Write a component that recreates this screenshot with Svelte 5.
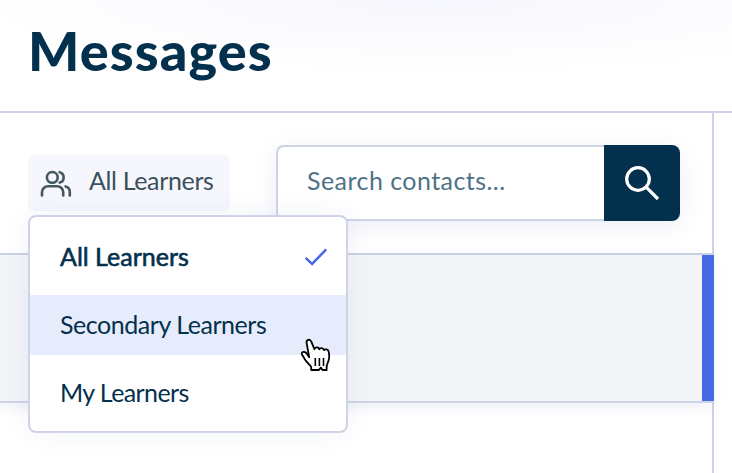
<script lang="ts">
	const options = ['All Learners', 'Secondary Learners', 'My Learners'];

	let selected = $state('All Learners');
	let highlighted = $state('Secondary Learners');
	let search = $state('');
</script>

<div class="page">
	<header>
		<h1>Messages</h1>
	</header>

	<div class="content">
		<div class="contacts">
			<div class="toolbar">
				<div class="filter">
					<button type="button" class="filter-btn">
						<svg class="people" viewBox="0 0 32 28" width="32" height="28">
							<circle cx="12.3" cy="8.4" r="5.4" />
							<path d="M2 26.4v-3.2a6 6 0 0 1 6-6h9.2a6 6 0 0 1 6 6v3.2" />
							<path d="M19.7 3.2a5.4 5.4 0 0 1 0 10.4M25.6 17.4a5.6 5.6 0 0 1 4.2 5.6v3.4" />
						</svg>
						<span>{selected}</span>
					</button>

					<ul class="menu">
						{#each options as option}
							<li
								class:selected={option === selected}
								class:highlighted={option === highlighted}
							>
								<button
									type="button"
									class:long={option.length > 12}
									onclick={() => selected = option}
									onmouseenter={() => highlighted = option}
								>
									{option}
								</button>
								{#if option === selected}
									<svg class="check" viewBox="0 0 24 18" width="24" height="18">
										<path d="M1.6 9.8l6.5 6.1L22.2 1.4" />
									</svg>
								{/if}
								{#if option === highlighted}
									<svg class="pointer" viewBox="0 0 32 34" width="32" height="34">
										<path d="M9.2 19.2L6.6 4.8C6 1.4 10.2.6 11.3 3.7l3.1 7.5c.5-2.6 4.5-2.5 4.9.2.9-2 4.3-1.7 4.6.8 1.2-1.5 4.3-1 4.8 1.6.9 3.9.6 8-1.2 11.6-1 1.9-1.2 3.4-.9 6.6h-4.1l-1.6-2.4-2 2.4h-7.7v-3.1c-1.7-2.4-4.1-4.3-5.9-6.9-1.2-1.9-1.8-3.6-3.2-5.1-1.2-1.9.6-3.8 2.9-2.8 1.9.9 2.9 3.3 4.2 5.1z" />
										<path class="lines" d="M15.3 20v8M19.4 20v8M23.5 20v8" />
									</svg>
								{/if}
							</li>
						{/each}
					</ul>
				</div>

				<form class="search">
					<input type="text" placeholder="Search contacts..." bind:value={search} />
					<button type="button" aria-label="Search">
						<svg viewBox="0 0 36 36" width="36" height="36">
							<circle cx="14" cy="14" r="11.3" />
							<path d="M22.2 22.2L34 34" />
						</svg>
					</button>
				</form>
			</div>

			<div class="conversation"></div>
		</div>
		<div class="thread"></div>
	</div>
</div>

<style>
	:global(body) {
		background: #fff;
		overflow: hidden;
	}

	.page {
		display: flex;
		flex-direction: column;
		height: 473px;
		font-family: Lato, "Liberation Sans", sans-serif;
		color: #03304d;
	}

	header {
		box-sizing: border-box;
		height: 113px;
		flex: none;
		padding: 19px 28px 0 28px;
		border-bottom: 2px solid #ced4e5;
		background: radial-gradient(ellipse 480px 75px at 60% 0, #f6f7fd, #fff);
	}

	h1 {
		margin: 0;
		font-size: 54px;
		font-weight: 900;
		line-height: 64px;
		letter-spacing: 1.1px;
	}

	button {
		border: none;
		background: none;
		font: inherit;
		color: inherit;
		cursor: pointer;
	}

	svg {
		fill: none;
		flex: none;
	}

	.content {
		display: flex;
		flex: 1;
	}

	.contacts {
		box-sizing: border-box;
		width: 714px;
		border-right: 2px solid #ced4e5;
	}

	.thread {
		flex: 1;
	}

	.toolbar {
		box-sizing: border-box;
		display: flex;
		align-items: flex-start;
		gap: 46px;
		height: 142px;
		padding: 32px 28px;
		border-bottom: 2px solid #ced4e5;
	}

	.filter {
		position: relative;
		margin-top: 10px;
	}

	.filter-btn {
		display: flex;
		align-items: center;
		gap: 17px;
		width: 202px;
		height: 56px;
		padding: 0 12px;
		border-radius: 6px;
		background: #f6f7fc;
		color: #3b505d;
		font-size: 25px;
		letter-spacing: -0.35px;
		white-space: nowrap;
	}

	.filter-btn span {
		padding-bottom: 7px;
	}

	.people {
		stroke: #435760;
		stroke-width: 2.6;
		stroke-linecap: round;
	}

	.menu {
		position: absolute;
		z-index: 2;
		top: 60px;
		left: 0;
		box-sizing: border-box;
		width: 320px;
		height: 218px;
		margin: 0;
		padding: 10px 0;
		border: 2px solid #ced4e5;
		border-radius: 8px;
		background: #fff;
		box-shadow: 0 0 24px rgba(75, 95, 175, 0.08);
		list-style: none;
	}

	li {
		position: relative;
		display: flex;
		align-items: center;
		justify-content: space-between;
		height: 60px;
		margin-bottom: 8px;
		padding: 0 18px 0 30px;
	}

	li button {
		padding: 0 0 3px;
		font-size: 25px;
		letter-spacing: -0.6px;
	}

	li button.long {
		letter-spacing: -0.45px;
	}

	li.selected button {
		-webkit-text-stroke: 0.6px #03304d;
		letter-spacing: 0;
	}

	li.highlighted {
		background: #e6ecfb;
	}

	.check {
		stroke: #466ae4;
		stroke-width: 2.5;
	}

	/* hand cursor over the hovered option */
	.pointer {
		position: absolute;
		top: 43px;
		left: 270px;
		fill: #fff;
		stroke: #000;
		stroke-width: 1.8;
		stroke-linejoin: round;
		pointer-events: none;
	}

	.pointer .lines {
		stroke-width: 1.6;
	}

	.search {
		display: flex;
		width: 404px;
		height: 76px;
		border-radius: 8px;
		box-shadow: 0 6px 24px rgba(75, 95, 175, 0.1);
	}

	.search input {
		box-sizing: border-box;
		width: 328px;
		padding: 0 0 6px 29px;
		border: 2px solid #ced4e5;
		border-right: none;
		border-radius: 8px 0 0 8px;
		outline: none;
		background: #fff;
		color: #03304d;
		font: inherit;
		font-size: 25px;
		letter-spacing: 0.45px;
	}

	.search input::placeholder {
		color: #4f7287;
		opacity: 1;
	}

	.search button {
		display: flex;
		align-items: center;
		justify-content: center;
		width: 76px;
		padding: 0;
		border-radius: 0 8px 8px 0;
		background: #03304d;
	}

	.search svg {
		stroke: #fff;
		stroke-width: 3.2;
	}

	.conversation {
		box-sizing: border-box;
		position: relative;
		height: 148px;
		border-bottom: 2px solid #ced4e5;
		background: #f3f4f8;
		box-shadow: 0 4px 12px rgba(75, 95, 175, 0.1);
	}

	.conversation::after {
		content: '';
		position: absolute;
		top: 0;
		right: -2px;
		width: 12px;
		height: 146px;
		background: #466ae4;
	}
</style>
